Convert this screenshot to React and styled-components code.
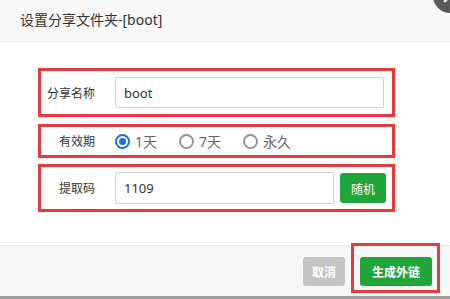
import React, { useState } from 'react';
import styled, { createGlobalStyle } from 'styled-components';

const GlobalStyle = createGlobalStyle`
  html, body {
    margin: 0;
    padding: 0;
    background: #ffffff;
  }
  body {
    font-family: "Noto Sans", "Noto Sans CJK SC", sans-serif;
    color: #333;
  }
`;

const Dialog = styled.div`
  position: relative;
  width: 450px;
  height: 299px;
  overflow: hidden;
  display: flex;
  flex-direction: column;
  background: #fff;
`;

const Header = styled.div`
  height: 41px;
  line-height: 40px;
  padding-left: 20px;
  background: #f8f8f8;
  border-bottom: 1px solid #ebebeb;
  font-size: 14px;
  color: #333;
`;

const CloseBtn = styled.span`
  position: absolute;
  top: -21px;
  right: -17px;
  width: 34px;
  height: 34px;
  border-radius: 50%;
  background: #595959;
  display: flex;
  align-items: center;
  justify-content: center;
`;

const Body = styled.div`
  height: 203px;
  padding: 26px 0 0 38px;
  box-sizing: border-box;
  display: flex;
  flex-direction: column;
  gap: ${p => p.$gap || 6}px;
`;

const Row = styled.div`
  width: 357px;
  height: ${p => p.$h}px;
  box-sizing: border-box;
  border: 3px solid #e63a3f;
  display: flex;
  align-items: center;
  margin-top: ${p => p.$mt || 0}px;
`;

const Label = styled.span`
  width: 54px;
  text-align: right;
  font-size: 12px;
  color: #333;
  margin-right: 20px;
  flex-shrink: 0;
`;

const Input = styled.input`
  width: ${p => p.$w}px;
  height: ${p => p.$h}px;
  box-sizing: border-box;
  border: 1px solid #cfcfcf;
  border-radius: 2px;
  padding: 0 8px;
  font-family: "Noto Sans", "Noto Sans CJK SC", sans-serif;
  font-size: 13px;
  color: #333;
  outline: none;
`;

const GreenBtn = styled.button`
  height: ${p => p.$h || 30}px;
  padding: 0 ${p => p.$px || 11}px;
  border: none;
  border-radius: 3px;
  background: #20a53a;
  color: #fff;
  font-family: "Noto Sans CJK SC", sans-serif;
  font-size: 12px;
  font-weight: ${p => (p.$bold ? 700 : 400)};
  margin-left: ${p => p.$ml || 0}px;
  cursor: pointer;
`;

const Options = styled.div`
  display: flex;
  align-items: center;
`;

const Option = styled.label`
  width: 64px;
  display: flex;
  align-items: center;
  gap: 5px;
  font-size: 14px;
  color: #666;
  cursor: pointer;
`;

const Circle = styled.span`
  width: 15px;
  height: 15px;
  box-sizing: border-box;
  border-radius: 50%;
  border: 2px solid ${p => (p.$on ? '#1a6fd8' : '#959595')};
  display: flex;
  align-items: center;
  justify-content: center;
  &::after {
    content: '';
    width: 7px;
    height: 7px;
    border-radius: 50%;
    background: ${p => (p.$on ? '#1a6fd8' : 'transparent')};
  }
`;

const Footer = styled.div`
  height: 50px;
  border-top: 1px solid #e8e8e8;
  background: #f6f7f7;
  display: flex;
  justify-content: flex-end;
  align-items: flex-start;
  padding-right: 10px;
`;

const GrayBtn = styled.button`
  margin-top: 11px;
  height: 29px;
  padding: 0 9px;
  border: none;
  border-radius: 3px;
  background: #c4c4c4;
  color: #fff;
  font-family: "Noto Sans CJK SC", sans-serif;
  font-size: 12px;
  font-weight: 700;
  margin-right: 6px;
`;

const Highlight = styled.div`
  margin-top: -3px;
  height: 50px;
  box-sizing: border-box;
  border: 3px solid #e63a3f;
  padding: 11px 5px 0 6px;
`;

const BottomEdge = styled.div`
  height: 3px;
  background: #9e9e9e;
`;

const periods = ['1天', '7天', '永久'];

export default function App() {
  const [period, setPeriod] = useState('1天');
  const [name, setName] = useState('boot');
  const [code, setCode] = useState('1109');

  return (
    <>
      <GlobalStyle />
      <Dialog>
        <Header>设置分享文件夹-[boot]</Header>
        <CloseBtn>
          <svg width="16" height="16" viewBox="0 0 16 16">
            <path d="M3 3 L13 13 M13 3 L3 13" stroke="#fff" strokeWidth="2.6" strokeLinecap="round" />
          </svg>
        </CloseBtn>
        <Body>
          <Row $h={49}>
            <Label>分享名称</Label>
            <Input $w={269} $h={31} value={name} onChange={e => setName(e.target.value)} />
          </Row>
          <Row $h={34} $mt={1}>
            <Label>有效期</Label>
            <Options>
              {periods.map(p => (
                <Option key={p} onClick={() => setPeriod(p)}>
                  <Circle $on={period === p} />
                  {p}
                </Option>
              ))}
            </Options>
          </Row>
          <Row $h={48}>
            <Label>提取码</Label>
            <Input $w={219} $h={32} value={code} onChange={e => setCode(e.target.value)} />
            <GreenBtn $ml={6} $h={30}>随机</GreenBtn>
          </Row>
        </Body>
        <Footer>
          <GrayBtn>取消</GrayBtn>
          <Highlight>
            <GreenBtn $h={29} $px={12} $bold>生成外链</GreenBtn>
          </Highlight>
        </Footer>
        <BottomEdge />
      </Dialog>
    </>
  );
}
